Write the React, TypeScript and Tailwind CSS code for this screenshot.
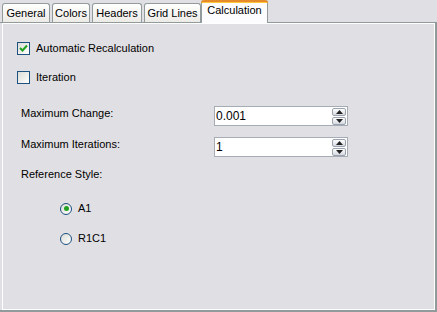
import React from "react";

const font = { fontFamily: '"Liberation Sans", Arial, sans-serif' };

function Tab({ label, w, selected }: { label: string; w: number; selected?: boolean }) {
  if (selected) {
    return (
      <div
        className="relative -mb-px flex h-[23px] items-start justify-center rounded-t-[3px] border-x border-[#919b9c] bg-[#fcfcfe] pt-[2px] text-[11px] text-black z-10"
        style={{ width: w }}
      >
        <div className="absolute left-[-1px] right-[-1px] top-0 h-[3px] rounded-t-[3px] border-t-2 border-[#e68b2c] bg-[#ffc73c]" />
        <span className="mt-[2px] leading-[13px]">{label}</span>
      </div>
    );
  }
  return (
    <div
      className="flex h-[19px] items-center justify-center rounded-t-[3px] border-x border-t border-[#919b9c] bg-gradient-to-b from-white to-[#ecebe6] text-[11px] text-black"
      style={{ width: w }}
    >
      <span className="mt-px leading-[13px]">{label}</span>
    </div>
  );
}

function Checkbox({ checked }: { checked?: boolean }) {
  return (
    <div className="flex h-[13px] w-[13px] items-center justify-center border border-[#1c5180] bg-gradient-to-br from-[#dcdcd7] to-white">
      {checked && (
        <svg width="9" height="9" viewBox="0 0 9 9">
          <path d="M1 4 L3.5 6.5 L8 1.5" stroke="#21a121" strokeWidth="2" fill="none" />
        </svg>
      )}
    </div>
  );
}

function Radio({ checked }: { checked?: boolean }) {
  return (
    <div className="flex h-[12px] w-[12px] items-center justify-center rounded-full border border-[#1c5180] bg-gradient-to-br from-[#dcdcd7] to-white">
      {checked && <div className="h-[5px] w-[5px] rounded-full bg-[#21a121]" />}
    </div>
  );
}

function SpinBtn({ up }: { up?: boolean }) {
  return (
    <div className="flex h-[8px] w-[14px] items-center justify-center rounded-[2px] border border-[#9aa3ad] bg-gradient-to-b from-white to-[#d5d9e0]">
      <svg width="7" height="4" viewBox="0 0 7 4">
        {up ? <path d="M0 4 L3.5 0 L7 4 Z" fill="#222" /> : <path d="M0 0 L3.5 4 L7 0 Z" fill="#222" />}
      </svg>
    </div>
  );
}

function Spinner({ value }: { value: string }) {
  return (
    <div className="flex h-[20px] w-[134px] items-center justify-between border border-[#a5acb5] bg-white pl-[1px] pr-[1px]">
      <span className="text-[12px] leading-[14px] text-black">{value}</span>
      <div className="flex flex-col gap-px">
        <SpinBtn up />
        <SpinBtn />
      </div>
    </div>
  );
}

export default function App() {
  return (
    <div className="flex h-[312px] w-[437px] flex-col bg-[#e0dfe3] text-[#0a0a14]" style={font}>
      <div className="flex h-[22px] items-end pl-[2px]">
        <div className="flex items-end gap-[2px]">
          <Tab label="General" w={48} />
          <Tab label="Colors" w={38} />
          <Tab label="Headers" w={50} />
          <Tab label="Grid Lines" w={57} />
        </div>
        <div>
          <Tab label="Calculation" w={67} selected />
        </div>
      </div>
      <div className="flex-1 border-b-2 border-t border-[#919b9c] pl-[2px]">
        <div className="h-full border-l border-r-2 border-l-white border-r-[#919b9c] bg-[#e0dfe3]">
          <div className="h-full border-r border-t border-b border-white text-[11px] leading-[13px] text-black">
            <div className="flex flex-col pl-[14px]">
              <div className="mt-[18px] flex h-[13px] items-center gap-[6px]">
                <Checkbox checked />
                <span>Automatic Recalculation</span>
              </div>
              <div className="mt-[16px] flex h-[13px] items-center gap-[6px]">
                <Checkbox />
                <span>Iteration</span>
              </div>
            </div>
            <div className="flex flex-col pl-[18px]">
              <div className="mt-[22px] flex h-[20px] items-start">
                <span className="w-[193px] pt-[1px]">Maximum Change:</span>
                <Spinner value="0.001" />
              </div>
              <div className="mt-[11px] flex h-[20px] items-start">
                <span className="w-[193px] pt-[1px]">Maximum Iterations:</span>
                <Spinner value="1" />
              </div>
              <div className="mt-[11px] h-[13px]">Reference Style:</div>
            </div>
            <div className="flex flex-col pl-[57px]">
              <div className="mt-[21px] flex h-[13px] items-center gap-[6px]">
                <Radio checked />
                <span>A1</span>
              </div>
              <div className="mt-[17px] flex h-[13px] items-center gap-[6px]">
                <Radio />
                <span>R1C1</span>
              </div>
            </div>
          </div>
        </div>
      </div>
    </div>
  );
}
